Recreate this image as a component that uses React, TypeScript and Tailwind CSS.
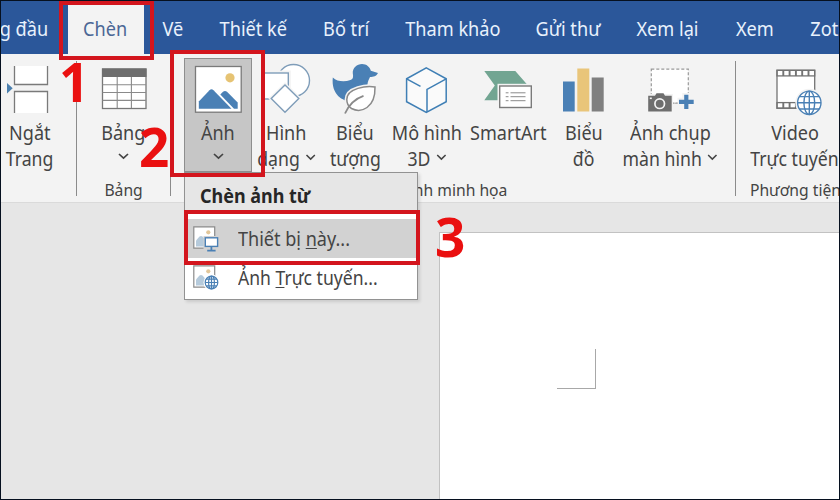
import type { ReactNode } from 'react';
import clsx from 'clsx';

interface Tab {
  label: string;
  width: string;
  active?: boolean;
}

const tabs: Tab[] = [
  { label: 'Trang đầu', width: 'w-[65px] justify-end pr-4' },
  { label: 'Chèn', width: 'w-[79px]', active: true },
  { label: 'Vẽ', width: 'w-[56px]' },
  { label: 'Thiết kế', width: 'w-[105px]' },
  { label: 'Bố trí', width: 'w-[81px]' },
  { label: 'Tham khảo', width: 'w-[131px]' },
  { label: 'Gửi thư', width: 'w-[100px]' },
  { label: 'Xem lại', width: 'w-[99px]' },
  { label: 'Xem', width: 'w-[75px]' },
  { label: 'Zotero', width: 'w-[92px] justify-start pl-[17px]' },
];

function Chevron({ className }: { className?: string }) {
  return (
    <svg width="11" height="7" viewBox="0 0 11 7" fill="none" stroke="#444" strokeWidth="1.7" className={className}>
      <path d="M1 1 L5.5 5.2 L10 1" />
    </svg>
  );
}

/* Icons share the ribbon's coordinate space, y starts at 58 */

function PageBreakIcon() {
  return (
    <svg width="57" height="62" viewBox="1 58 57 62">
      <path d="M14.5 66 V84.5 H47.5 V66" fill="#fff" stroke="#7a7a7a" strokeWidth="1.3" />
      <path d="M14.5 113 V91.5 H47.5 V113" fill="#fff" stroke="#7a7a7a" strokeWidth="1.3" />
      <path d="M7 83 L12.7 88.3 L7 93.5 Z" fill="#4a7fae" />
    </svg>
  );
}

function TableIcon() {
  return (
    <svg width="92" height="62" viewBox="78 58 92 62">
      <rect x="102.5" y="69" width="43.5" height="39.5" fill="#fff" stroke="#777" strokeWidth="1.3" />
      <rect x="102" y="68.5" width="44.5" height="8.5" fill="#6e6e6e" />
      <path d="M117.2 77 V108 M131.4 77 V108 M102.5 84.7 H146 M102.5 92.5 H146 M102.5 100.4 H146" stroke="#8a8a8a" strokeWidth="1.1" />
    </svg>
  );
}

function PictureIcon() {
  return (
    <svg width="66" height="61" viewBox="185 59 66 61">
      <rect x="195.5" y="66.5" width="45.7" height="45.7" fill="#fff" stroke="#7a7a7a" strokeWidth="1.3" />
      <circle cx="230" cy="77.8" r="4.6" fill="#e6c373" />
      <path d="M198.8 108.7 V101.5 L209.5 90.2 Q211.5 88.2 213.5 90.2 L231.5 108.7 Z" fill="#4a80b5" />
      <path d="M234 108.7 L220.3 94.6 L223 91.8 Q225 90 227 91.8 L237.7 102.5 V108.7 Z" fill="#4a80b5" />
    </svg>
  );
}

function ShapesIcon() {
  return (
    <svg width="68" height="62" viewBox="252 58 68 62" fill="#fff">
      <circle cx="293.5" cy="80.5" r="16" stroke="#7f9db9" strokeWidth="1.4" />
      <rect x="264" y="73" width="24.3" height="26" stroke="#f3f3f3" strokeWidth="5" />
      <rect x="264" y="73" width="24.3" height="26" stroke="#7f9db9" strokeWidth="1.4" />
      <path d="M285 85 L298.8 98.5 L285 112.3 L271.2 98.5 Z" stroke="#f3f3f3" strokeWidth="4" />
      <path d="M285 85 L298.8 98.5 L285 112.3 L271.2 98.5 Z" stroke="#7f9db9" strokeWidth="1.4" />
    </svg>
  );
}

function DuckIcon() {
  return (
    <svg width="70" height="62" viewBox="320 58 70 62">
      <path
        d="M332.8 77.5 C337 81.5 344 82.5 350.5 80 C353.5 78.8 353.3 76.5 352.8 73.5 C352.3 68 357 64 362 64 C366.5 64 369.8 66.8 370.8 70.8 L378 73 C376.5 76.3 373.5 76.8 370 77 C369 79.5 367.6 81.5 367.5 84.5 L366 90 L352 101.5 C342.5 101.5 331 94.5 332.8 77.5 Z"
        fill="#4a80b5"
      />
      <path d="M375 87 C367 85.5 346.8 88 346.8 99.5 C346.8 103 348.4 106.5 351.5 108.5 C361 113.5 375.5 108 375 87 Z" fill="#fff" stroke="#f3f3f3" strokeWidth="4.5" />
      <path d="M375 87 C367 85.5 346.8 88 346.8 99.5 C346.8 103 348.4 106.5 351.5 108.5 C361 113.5 375.5 108 375 87 Z" fill="#fff" stroke="#8a8a8a" strokeWidth="1.5" />
      <path d="M345 113.5 C348.5 105.5 355.5 98.5 363.5 95.8" fill="none" stroke="#8a8a8a" strokeWidth="1.8" />
    </svg>
  );
}

function CubeIcon() {
  return (
    <svg width="74" height="62" viewBox="390 58 74 62" fill="none" stroke="#3f7fb5" strokeWidth="1.5">
      <path d="M426.3 67.8 L446.2 78.8 V101.7 L426.3 112.4 L406.6 101.7 V78.8 Z" fill="#fafafa" />
      <path d="M406.6 78.8 L420.5 86.4 M446.2 78.8 L427 89.4 V112" />
    </svg>
  );
}

function SmartArtIcon() {
  return (
    <svg width="88" height="62" viewBox="464 58 88 62">
      <path d="M484.3 71 H515.3 L528 85.5 L515 100.2 H484.3 L494.8 85.5 Z" fill="#72a592" />
      <rect x="497.5" y="83.8" width="36" height="26" fill="#f3f3f3" />
      <rect x="499.7" y="86" width="31.6" height="21.5" fill="#fff" stroke="#7a7a7a" strokeWidth="1.4" />
      <path d="M505.7 92.8 H508.5 M505.7 96.7 H508.5 M505.7 100.7 H508.5 M510.5 92.8 H525.5 M510.5 96.7 H525.5 M510.5 100.7 H525.5" stroke="#8a8a8a" />
    </svg>
  );
}

function ChartIcon() {
  return (
    <svg width="64" height="62" viewBox="552 58 64 62">
      <rect x="563" y="81.5" width="11.7" height="30" fill="#4a80b5" />
      <rect x="577.3" y="68.5" width="12" height="43" fill="#e9c57a" />
      <rect x="591.7" y="77.5" width="12" height="34" fill="#7f7f7f" />
    </svg>
  );
}

function ScreenshotIcon() {
  return (
    <svg width="108" height="62" viewBox="616 58 108 62">
      <rect x="651.3" y="69.2" width="37" height="34" fill="#fff" stroke="#999" strokeWidth="1.2" strokeDasharray="3 2" />
      <path d="M646 94 H673 V113 H646 Z" fill="#f3f3f3" />
      <path d="M648.2 95.8 H655 L656.5 93.2 H663.5 L665 95.8 H671.7 V111.5 H648.2 Z" fill="#6e6e6e" />
      <circle cx="659.7" cy="103.7" r="4.8" fill="none" stroke="#f3f3f3" strokeWidth="1.7" />
      <rect x="649.8" y="97.5" width="2" height="1.6" fill="#f3f3f3" />
      <path d="M686.3 93 V111 M677.5 101.8 H695" stroke="#f3f3f3" strokeWidth="8" />
      <path d="M674.5 103.2 H677.5" stroke="#aaa" strokeWidth="1.2" />
      <path d="M686.3 94.7 V109 M679 101.8 H693.7" stroke="#4a80b5" strokeWidth="4.2" />
    </svg>
  );
}

function VideoIcon() {
  return (
    <svg width="118" height="62" viewBox="736 58 118 62" fill="none">
      <rect x="777" y="70.3" width="37.7" height="37.9" fill="#fff" stroke="#737373" strokeWidth="1.3" />
      <rect x="777" y="70.3" width="37.7" height="5.6" stroke="#737373" strokeWidth="1.3" />
      <rect x="777" y="102.6" width="37.7" height="5.6" stroke="#737373" strokeWidth="1.3" />
      <path d="M783.3 70.5 V76 M789.6 70.5 V76 M795.9 70.5 V76 M802.2 70.5 V76 M808.5 70.5 V76 M783.3 102.6 V108 M789.6 102.6 V108 M795.9 102.6 V108" stroke="#737373" strokeWidth="1.9" />
      <circle cx="809.3" cy="102.8" r="14" fill="#f3f3f3" />
      <g stroke="#4a80b5" strokeWidth="1.4">
        <circle cx="809.3" cy="102.8" r="11.7" fill="#fff" />
        <ellipse cx="809.3" cy="102.8" rx="5.4" ry="11.7" />
        <path d="M809.3 91 V114.5 M797.6 102.8 H821 M799.5 96.6 H819.1 M799.5 109 H819.1" />
      </g>
    </svg>
  );
}

function MenuPictureBase() {
  return (
    <>
      <path d="M0.8 0.8 H21.7 V22.2 H0.8 Z" fill="#fff" stroke="#8a8a8a" strokeWidth="1.2" />
      <circle cx="15.3" cy="6.3" r="2.1" fill="#e2c79a" />
      <path d="M3 20.5 V14.5 L6.5 10.6 Q8 9.3 9.5 10.6 L13 14.5 V20.5 Z" fill="#b5cadb" />
    </>
  );
}

function DeviceIcon() {
  return (
    <svg width="26" height="27" viewBox="0 0 26 27">
      <MenuPictureBase />
      <rect x="10.5" y="10" width="16" height="14" fill="#d2d2d2" />
      <rect x="12.3" y="11.8" width="12.3" height="8.6" fill="#fff" stroke="#4a80b5" strokeWidth="1.4" />
      <path d="M18.4 20.5 V24.3 M14.2 24.6 H22.6" stroke="#4a80b5" strokeWidth="1.8" />
    </svg>
  );
}

function OnlineIcon() {
  return (
    <svg width="26" height="27" viewBox="0 0 26 27">
      <MenuPictureBase />
      <circle cx="18.5" cy="17.5" r="8" fill="#fff" />
      <g fill="none" stroke="#4a80b5" strokeWidth="1.2">
        <circle cx="18.5" cy="17.5" r="6.3" fill="#fff" />
        <ellipse cx="18.5" cy="17.5" rx="2.9" ry="6.3" />
        <path d="M12.2 17.5 H24.8 M13.2 14.2 H23.8 M13.2 20.8 H23.8 M18.5 11.2 V23.8" />
      </g>
    </svg>
  );
}

interface RibbonButtonProps {
  icon: ReactNode;
  lines: string[];
  width: string;
  chevron?: boolean;
}

function RibbonButton({ icon, lines, width, chevron }: RibbonButtonProps) {
  return (
    <button className={clsx('flex h-[114px] shrink-0 flex-col items-center', width)}>
      {icon}
      <span className="scale-x-[0.95] text-[19px] leading-[26px] whitespace-nowrap">{lines[0]}</span>
      <span className="flex h-[26px] scale-x-[0.93] items-center gap-[6px] text-[19px] leading-[26px] whitespace-nowrap">
        {lines[1]}
        {chevron && <Chevron className="mt-[-3px]" />}
      </span>
    </button>
  );
}

function RibbonGroup({ label, width, children }: { label?: string; width: string; children: ReactNode }) {
  return (
    <div className={clsx('flex shrink-0 flex-col items-center pt-1', width)}>
      <div className="flex w-full">{children}</div>
      <div className="mt-[5px] scale-x-[0.98] text-[16px] leading-[26px] whitespace-nowrap text-[#444]">{label}</div>
    </div>
  );
}

function Separator() {
  return <div className="mt-[7px] h-[135px] w-px shrink-0 bg-[#8b8b8b]" />;
}

function PictureMenu() {
  return (
    <div className="absolute top-[114px] left-0 z-10 h-[128px] w-[234px] border border-[#929292] bg-white text-left text-[#444] shadow-[2px_2px_3px_rgba(0,0,0,0.12)]">
      <div className="flex h-[40px] items-center bg-[#e6e6e6] pt-[6px] pl-[15px]">
        <span className="origin-left scale-x-[0.945] text-[19px] font-bold whitespace-nowrap text-[#262626]">Chèn ảnh từ</span>
      </div>
      <div className="mt-[6px] flex h-[39px] items-center gap-[19px] bg-[#d2d2d2] pt-px pl-2">
        <DeviceIcon />
        <span className="origin-left scale-x-[0.95] text-[19px] whitespace-nowrap">
          Thiết bị <u className="underline-offset-2">n</u>ày...
        </span>
      </div>
      <div className="flex h-[41px] items-center gap-[19px] pl-2">
        <OnlineIcon />
        <span className="origin-left scale-x-[0.925] text-[19px] whitespace-nowrap">
          Ảnh <u className="underline-offset-2">T</u>rực tuyến...
        </span>
      </div>
    </div>
  );
}

export default function App() {
  return (
    <div className="relative flex h-[500px] w-[840px] flex-col overflow-hidden border border-[#06101f] bg-[#e6e6e6] font-['Noto_Sans',sans-serif] text-[#444]">
      {/* Tabs */}
      <nav className="flex h-[53px] shrink-0 bg-[#2b579a] text-[19px] text-[#e8f1fc]">
        {tabs.map((tab) => (
          <div key={tab.label} className={clsx('flex shrink-0 items-center justify-center whitespace-nowrap', tab.width)}>
            <div className={clsx('flex h-full items-center pt-[3px]', tab.active && 'w-[76px] justify-center bg-[#f3f3f3] text-[#4b6795]')}>
              <span className="scale-x-[0.955]">{tab.label}</span>
            </div>
          </div>
        ))}
      </nav>

      {/* Ribbon */}
      <div className="flex h-[149px] shrink-0 border-b border-[#dadada] bg-[#f3f3f3]">
        <RibbonGroup width="w-[75px]">
          <RibbonButton icon={<PageBreakIcon />} lines={['Ngắt', 'Trang']} width="w-[57px]" />
        </RibbonGroup>
        <Separator />
        <RibbonGroup label="Bảng" width="w-[93px]">
          <button className="flex h-[114px] w-[93px] flex-col items-center">
            <TableIcon />
            <span className="scale-x-[0.95] text-[19px] leading-[26px]">Bảng</span>
            <Chevron className="mt-[7px]" />
          </button>
        </RibbonGroup>
        <Separator />
        <RibbonGroup label="Hình minh họa" width="w-[564px]">
          <div className="relative ml-[13px] h-[114px] w-[68px] shrink-0">
            <button className="flex h-full w-full flex-col items-center border border-[#8e8e8e] bg-[#c6c6c6]">
              <PictureIcon />
              <span className="scale-x-[0.95] text-[19px] leading-[26px]">Ảnh</span>
              <Chevron className="mt-[7px]" />
            </button>
            <PictureMenu />
          </div>
          <RibbonButton icon={<ShapesIcon />} lines={['Hình', 'dạng']} width="w-[68px]" chevron />
          <RibbonButton icon={<DuckIcon />} lines={['Biểu', 'tượng']} width="w-[70px]" />
          <RibbonButton icon={<CubeIcon />} lines={['Mô hình', '3D']} width="w-[74px]" chevron />
          <RibbonButton icon={<SmartArtIcon />} lines={['SmartArt', '']} width="w-[88px]" />
          <RibbonButton icon={<ChartIcon />} lines={['Biểu', 'đồ']} width="w-[64px]" />
          <RibbonButton icon={<ScreenshotIcon />} lines={['Ảnh chụp', 'màn hình']} width="w-[108px]" chevron />
        </RibbonGroup>
        <Separator />
        <RibbonGroup label="Phương tiện" width="w-[118px]">
          <RibbonButton icon={<VideoIcon />} lines={['Video', 'Trực tuyến']} width="w-[118px]" />
        </RibbonGroup>
      </div>

      {/* Document */}
      <main className="flex grow pt-[29px] pl-[438px]">
        <div className="grow border-t border-l border-[#c2c2c2] bg-white pt-[116px] pl-[117px]">
          <div className="h-[40px] w-[39px] border-r border-b border-[#a8a8a8]" />
        </div>
      </main>

      {/* Step callouts */}
      <div className="absolute top-0 left-[58px] z-20 h-[59px] w-[95px] border-4 border-[#d3151d]" />
      <div className="absolute top-[49px] left-[169px] z-20 h-[127px] w-[95px] border-4 border-[#d3151d]" />
      <div className="absolute top-[209px] left-[183px] z-20 h-[55px] w-[236px] border-4 border-[#d3151d]" />
      <span className="absolute top-[54px] left-[58px] z-20 text-[53px] leading-[53px] font-bold text-[#ea1010]">1</span>
      <span className="absolute top-[119px] left-[138px] z-20 text-[53px] leading-[53px] font-bold text-[#ea1010]">2</span>
      <span className="absolute top-[209px] left-[434px] z-20 text-[53px] leading-[53px] font-bold text-[#ea1010]">3</span>
    </div>
  );
}
